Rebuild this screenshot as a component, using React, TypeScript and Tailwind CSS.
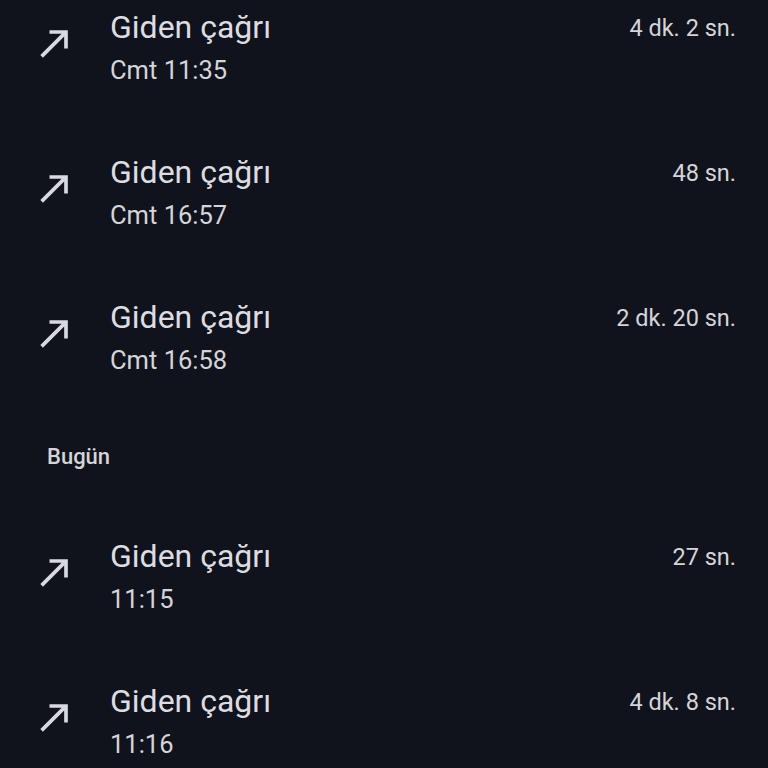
import React from "react";

const rows1 = [
  { time: "Cmt 11:35", dur: "4 dk. 2 sn." },
  { time: "Cmt 16:57", dur: "48 sn." },
  { time: "Cmt 16:58", dur: "2 dk. 20 sn." },
];
const rows2 = [
  { time: "11:15", dur: "27 sn." },
  { time: "11:16", dur: "4 dk. 8 sn." },
];

function Arrow() {
  return (
    <svg width="44" height="44" viewBox="0 0 24 24" className="shrink-0 mt-[15px] ml-[33px]" fill="#d9dae0">
      <path d="M9 5v2h6.59L4 18.59 5.41 20 17 8.41V15h2V5z" />
    </svg>
  );
}

function Row({ time, dur }: { time: string; dur: string }) {
  return (
    <div className="flex items-start h-[86px] mb-[59px]">
      <Arrow />
      <div className="flex flex-col ml-[33px] flex-1">
        <div className="text-[32px] leading-[42px] text-[#dcdde2]">Giden çağrı</div>
        <div className="text-[25.5px] leading-[44px] text-[#d4d5da]">{time}</div>
      </div>
      <div className="text-[23.5px] leading-[44px] text-[#d4d5da] mr-[32px]">{dur}</div>
    </div>
  );
}

export default function App() {
  return (
    <div
      className="w-[768px] h-[768px] overflow-hidden bg-[#11131c] pt-[6px]"
      style={{ fontFamily: "Roboto, 'Noto Sans', sans-serif" }}
    >
      {rows1.map((r, i) => (
        <Row key={i} {...r} />
      ))}
      <div className="h-[92px] -mt-[59px] pt-[63px] pl-[47px] mb-[61px]">
        <div className="text-[22px] leading-[24px] font-medium text-[#d4d5da]">Bugün</div>
      </div>
      {rows2.map((r, i) => (
        <Row key={i} {...r} />
      ))}
    </div>
  );
}
